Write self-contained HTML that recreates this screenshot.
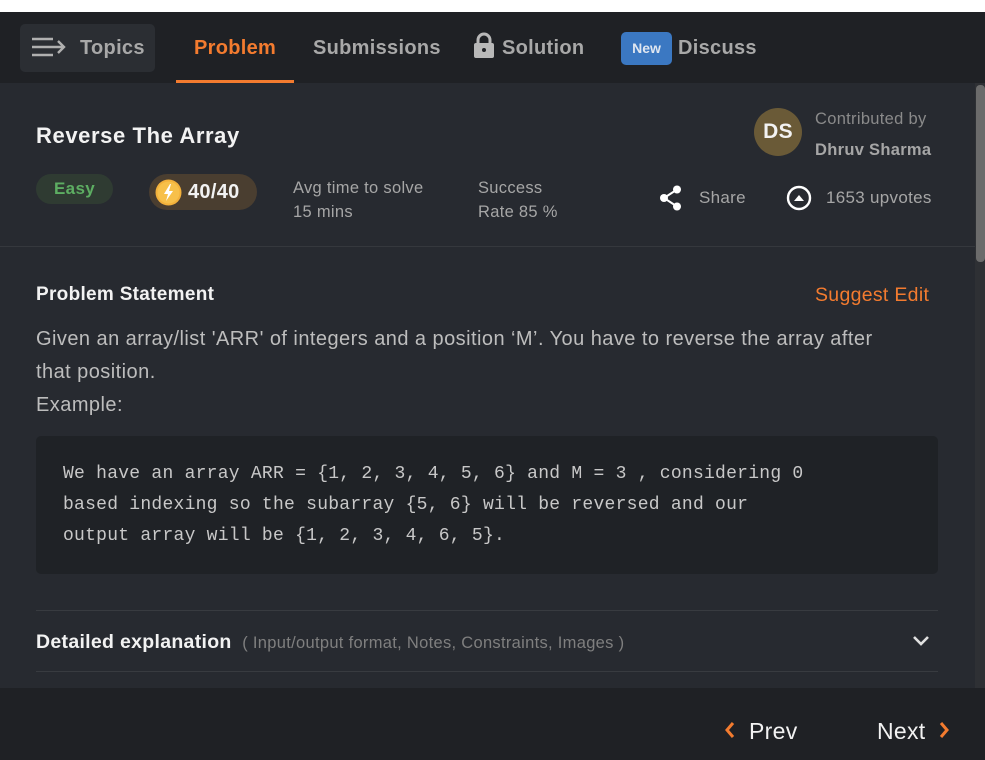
<!DOCTYPE html>
<html><head><style>
*{margin:0;padding:0;box-sizing:border-box}
body{width:985px;height:760px;overflow:hidden;background:#272a30;font-family:"Liberation Sans",sans-serif;position:relative;color:#e6e6e6;letter-spacing:.3px}
.a{position:absolute;white-space:nowrap}
</style></head><body>
<div class="a" style="left:0;top:0;width:985px;height:12px;background:#fff"></div>
<div class="a" style="left:0;top:12px;width:985px;height:71px;background:#1f2125"></div>
<div class="a" style="left:20px;top:24px;width:135px;height:48px;background:#2b2e33;border-radius:5px"></div>
<svg class="a" style="left:32px;top:36px" width="38" height="24" viewBox="0 0 38 24"><g stroke="#b0b0b0" stroke-width="2.4" fill="none"><path d="M0 3h21M0 11h32M0 19h21M26 5l6 6-6 6"/></g></svg>
<div class="a" style="left:80px;top:37px;font-size:20px;font-weight:bold;color:#a8a8a8">Topics</div>
<div class="a" style="left:194px;top:37px;font-size:20px;font-weight:bold;color:#f37b2f">Problem</div>
<div class="a" style="left:176px;top:80px;width:118px;height:3px;background:#f37b2f"></div>
<div class="a" style="left:313px;top:37px;font-size:20px;font-weight:bold;color:#a8a8a8">Submissions</div>
<svg class="a" style="left:473px;top:32px" width="22" height="27" viewBox="0 0 22 27"><path d="M5 12V8a6 6 0 0 1 12 0v4" stroke="#b8b8b8" stroke-width="3" fill="none"/><rect x="1" y="11" width="20" height="15" rx="2" fill="#b8b8b8"/><circle cx="11" cy="18" r="2" fill="#1f2125"/></svg>
<div class="a" style="left:502px;top:37px;font-size:20px;font-weight:bold;color:#a8a8a8">Solution</div>
<div class="a" style="left:621px;top:32px;width:51px;height:33px;background:#3b78c2;border-radius:5px;font-size:14px;font-weight:bold;color:#dfe6f0;text-align:center;line-height:32px;letter-spacing:0">New</div>
<div class="a" style="left:678px;top:37px;font-size:20px;font-weight:bold;color:#a8a8a8">Discuss</div>

<div class="a" style="left:975px;top:83px;width:10px;height:605px;background:#2e3034"></div>
<div class="a" style="left:976px;top:85px;width:9px;height:177px;background:#6b6b6b;border-radius:4px"></div>

<div class="a" style="left:36px;top:123px;font-size:22px;font-weight:bold;color:#f2f2f2;letter-spacing:.6px">Reverse The Array</div>
<div class="a" style="left:36px;top:174px;width:77px;height:30px;border-radius:15px;background:#2f3b32;color:#5dae62;font-weight:bold;font-size:17px;text-align:center;line-height:30px">Easy</div>
<div class="a" style="left:149px;top:174px;width:108px;height:36px;border-radius:18px;background:#4a3e30"></div>
<svg class="a" style="left:155px;top:179px" width="27" height="27" viewBox="0 0 27 27"><circle cx="13.5" cy="13.5" r="13" fill="#f3b13b"/><circle cx="13.5" cy="13.5" r="11" fill="#f7c04a"/><path d="M15 5l-6 10h4l-2 7 7-10h-4l2-7z" fill="#fff"/></svg>
<div class="a" style="left:188px;top:181px;font-size:20px;font-weight:bold;color:#f2f2f2">40/40</div>
<div class="a" style="left:293px;top:176px;font-size:16.5px;color:#a6a6a6;line-height:24px">Avg time to solve<br>15 mins</div>
<div class="a" style="left:478px;top:176px;font-size:16.5px;color:#a6a6a6;line-height:24px">Success<br>Rate 85 %</div>
<div class="a" style="left:754px;top:108px;width:48px;height:48px;border-radius:50%;background:#6a5a37;color:#f2f2f2;font-weight:bold;font-size:21px;text-align:center;line-height:48px">DS</div>
<div class="a" style="left:815px;top:110px;font-size:16.5px;color:#8a8a8a">Contributed by</div>
<div class="a" style="left:815px;top:141px;font-size:16.5px;font-weight:bold;color:#a6a6a6">Dhruv Sharma</div>
<svg class="a" style="left:659px;top:185px" width="24" height="26" viewBox="0 0 24 26"><g fill="#fff"><circle cx="18" cy="4.5" r="4"/><circle cx="5" cy="13" r="4"/><circle cx="18" cy="21.5" r="4"/></g><path d="M18 4.5L5 13l13 8.5" stroke="#fff" stroke-width="2" fill="none"/></svg>
<div class="a" style="left:699px;top:188px;font-size:17px;color:#a6a6a6">Share</div>
<svg class="a" style="left:786px;top:185px" width="26" height="26" viewBox="0 0 26 26"><circle cx="13" cy="13" r="11" stroke="#fff" stroke-width="2.4" fill="none"/><path d="M8 16l5-6 5 6z" fill="#fff"/></svg>
<div class="a" style="left:826px;top:188px;font-size:17px;color:#a6a6a6">1653 upvotes</div>

<div class="a" style="left:0;top:246px;width:975px;height:1px;background:#35383d"></div>

<div class="a" style="left:36px;top:284px;font-size:19px;font-weight:bold;color:#f2f2f2">Problem Statement</div>
<div class="a" style="left:815px;top:284px;font-size:19.5px;color:#f37b2f">Suggest Edit</div>
<div class="a" style="left:36px;top:323px;font-size:20px;color:#bdbdbd;line-height:33px;white-space:normal;width:866px;letter-spacing:.45px">Given an array/list 'ARR' of integers and a position ‘M’. You have to reverse the array after that position.<br>Example:</div>

<div class="a" style="left:36px;top:436px;width:902px;height:138px;background:#1f2226;border-radius:5px"></div>
<div class="a" style="left:63px;top:459px;font-family:'Liberation Mono',monospace;font-size:18px;line-height:31px;color:#c8c8c8;letter-spacing:.25px">We have an array ARR = {1, 2, 3, 4, 5, 6} and M = 3 , considering 0<br>based indexing so the subarray {5, 6} will be reversed and our<br>output array will be {1, 2, 3, 4, 6, 5}.</div>

<div class="a" style="left:36px;top:610px;width:902px;height:1px;background:#383b40"></div>
<div class="a" style="left:36px;top:631px;font-size:19.5px;font-weight:bold;color:#f2f2f2">Detailed explanation <span style="font-size:16.5px;font-weight:normal;color:#7f7f7f">&nbsp;( Input/output format, Notes, Constraints, Images )</span></div>
<svg class="a" style="left:912px;top:634px" width="18" height="14" viewBox="0 0 18 14"><path d="M2 3l7 7 7-7" stroke="#e0e0e0" stroke-width="2.6" fill="none"/></svg>
<div class="a" style="left:36px;top:671px;width:902px;height:1px;background:#383b40"></div>

<div class="a" style="left:0;top:688px;width:985px;height:72px;background:#1f2125"></div>
<svg class="a" style="left:724px;top:721px" width="12" height="18" viewBox="0 0 12 18"><path d="M9 2L3 9l6 7" stroke="#f37b2f" stroke-width="3" fill="none"/></svg>
<div class="a" style="left:749px;top:718px;font-size:23px;color:#f2f2f2">Prev</div>
<div class="a" style="left:877px;top:718px;font-size:23px;color:#f2f2f2">Next</div>
<svg class="a" style="left:938px;top:721px" width="12" height="18" viewBox="0 0 12 18"><path d="M3 2l6 7-6 7" stroke="#f37b2f" stroke-width="3" fill="none"/></svg>
</body></html>
